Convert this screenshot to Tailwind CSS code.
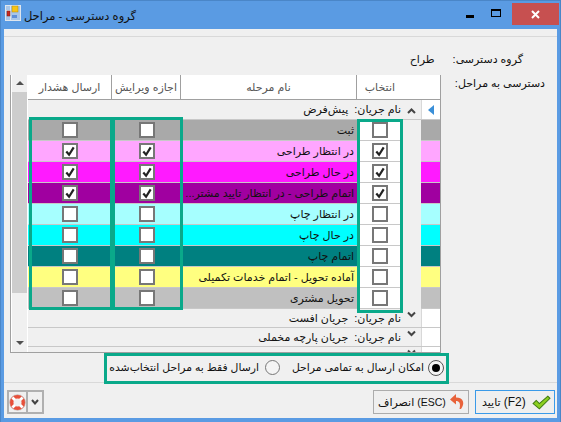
<!DOCTYPE html>
<html lang="fa">
<head>
    <meta charset="UTF-8">
    <title>گروه دسترسی - مراحل</title>
    <script src="https://cdn.jsdelivr.net/npm/@tailwindcss/browser@4"></script>
</head>
<body class="bg-[#5a9be3]">
    <div class="relative w-[561px] h-[422px] overflow-hidden flex flex-col text-[11px] text-[#111] font-['Liberation_Sans','DejaVu_Sans',sans-serif] border border-[#4a86c8] border-b-0">
        <!-- title bar -->
        <header class="h-[28px] shrink-0 flex items-start bg-[#5a9be3]">
            <svg class="ml-[4px] mt-[4px] w-[16px] h-[16px]" viewBox="0 0 16 16">
                <rect x="0.5" y="0.5" width="15" height="15" fill="#a9c6e8" stroke="#dfe6ee"/>
                <path d="M0 5.5 H5 M5.5 0 V16" stroke="#dfe6ee"/>
                <rect x="2" y="6" width="3" height="5" fill="#c8281e" stroke="#7a1a14" stroke-width="0.5"/>
                <rect x="7" y="1" width="6" height="6" fill="#f7c416" stroke="#b08a10" stroke-width="0.5"/>
                <rect x="7" y="10" width="5" height="3" fill="#5f8fd8"/>
            </svg>
            <span dir="rtl" class="ml-[5px] mt-[6px] w-[110px] text-[11.5px] leading-[18px] whitespace-nowrap">گروه دسترسی - مراحل</span>
            <div class="ml-auto flex items-start">
                <div class="w-[26px] h-[24px] flex items-start justify-center"><div class="mt-[14px] w-[8px] h-[3px] bg-black"></div></div>
                <div class="w-[26px] h-[24px] flex items-start justify-center"><div class="mt-[8px] w-[10px] h-[8px] border border-black border-t-2"></div></div>
                <div class="ml-[3px] mr-[1px] mt-[2px] w-[47px] h-[22px] bg-[#c75050] flex items-center justify-center">
                    <svg class="w-[9px] h-[9px]" viewBox="0 0 9 9"><path d="M1 1 L8 8 M8 1 L1 8" stroke="#fff" stroke-width="2"/></svg>
                </div>
            </div>
        </header>

        <!-- dialog body -->
        <main class="mx-[3px] mb-[4px] flex-1 bg-[#f0f0f0] flex flex-col">
            <div class="h-[8px] border-b border-[#d9d9d9]"></div>

            <div dir="rtl" class="h-[38px] pt-[14px] pr-[34px] flex gap-[18px] leading-[16px] whitespace-nowrap">
                <span>گروه دسترسی:</span>
                <span>طراح</span>
            </div>

            <div class="flex pl-[6px] h-[278px]">
                <!-- grid -->
                <div class="w-[431px] h-[278px] shrink-0 border-l border-r border-b border-[#a0a0a0] flex bg-[#f0f0f0]">
                    <!-- scrollbar -->
                    <div class="w-[17px] shrink-0 bg-white flex">
                        <div class="ml-[1px] w-[15px] bg-[#f0f0f0] flex flex-col items-center">
                            <div class="mt-[6px] w-0 h-0 border-x-[4px] border-x-transparent border-b-[4px] border-b-[#505050]"></div>
                            <div class="mt-[7px] w-full h-[201px] bg-[#cdcdcd]"></div>
                            <div class="mt-[48px] w-0 h-0 border-x-[4px] border-x-transparent border-t-[4px] border-t-[#505050]"></div>
                        </div>
                    </div>
                    <!-- table -->
                    <div class="flex-1 min-w-0 overflow-hidden">
                        <div class="h-[25px] flex bg-white border-b border-[#a0a0a0] text-[#555]">
                            <div dir="rtl" class="w-[84px] border-r border-[#a0a0a0] flex items-center justify-center">ارسال هشدار</div>
                            <div dir="rtl" class="w-[69px] border-r border-[#a0a0a0] flex items-center justify-center">اجازه ویرایش</div>
                            <div dir="rtl" class="w-[176px] border-r border-[#a0a0a0] flex items-center justify-center">نام مرحله</div>
                            <div dir="rtl" class="w-[83px] pr-[45px] flex items-center justify-start">انتخاب</div>
                        </div>
                        <div id="rows"></div>
                    </div>
                </div>
                <div dir="rtl" class="flex-1 pr-[12px] leading-[16px] whitespace-nowrap">دسترسی به مراحل:</div>
            </div>

            <!-- radios -->
            <div class="h-[30px] border-b border-[#d9d9d9] flex items-start pl-[100px]">
                <div class="w-[344px] h-[29px] flex items-center text-[10.8px]">
                    <div dir="rtl" class="w-[150px] ml-[5px] text-right whitespace-nowrap">ارسال فقط به مراحل انتخاب‌شده</div>
                    <div class="ml-[6px] w-[15px] h-[15px] rounded-full border border-[#777] bg-[#f4f4f4]"></div>
                    <div dir="rtl" class="ml-[12px] w-[132px] whitespace-nowrap text-right">امکان ارسال به تمامی مراحل</div>
                    <div class="ml-[4px] w-[16px] h-[16px] rounded-full border border-[#555] bg-[#f4f4f4] flex items-center justify-center"><div class="w-[8px] h-[8px] rounded-full bg-black"></div></div>
                </div>
            </div>

            <!-- footer -->
            <footer class="flex items-start pt-[7px] pl-[3px] pr-[2px]">
                <div class="h-[24px] flex border-2 border-[#b0b0b0]">
                    <div class="w-[19px] flex items-center justify-center border-r-2 border-[#b0b0b0]">
                        <svg class="w-[17px] h-[17px]" viewBox="0 0 16 16">
                            <circle cx="8" cy="8" r="5.6" fill="none" stroke="#e8503a" stroke-width="3.6"/>
                            <path d="M3.2 3.2 L5.6 5.6 M12.8 3.2 L10.4 5.6 M3.2 12.8 L5.6 10.4 M12.8 12.8 L10.4 10.4" stroke="#fff" stroke-width="2.6"/>
                            <circle cx="8" cy="8" r="7.4" fill="none" stroke="#b8b8b8" stroke-width="0.5"/>
                        </svg>
                    </div>
                    <div class="w-[14px] flex items-center justify-center">
                        <svg class="w-[8px] h-[6px]" viewBox="0 0 8 6"><path d="M1 1 L4 4.5 L7 1" fill="none" stroke="#444" stroke-width="2"/></svg>
                    </div>
                </div>
                <div class="ml-auto flex gap-[6px]">
                    <div class="w-[96px] h-[24px] bg-[#efefef] border border-[#acacac] flex items-center pl-[4px] pr-[3px]">
                        <span dir="rtl" class="whitespace-nowrap"><span class="text-[10.5px]">(ESC)</span> انصراف</span>
                        <svg class="ml-auto w-[16px] h-[18px]" viewBox="0 0 16 18"><path d="M7 1 L1 6.5 L7 11.5 L7 8 C10 8 12 10 10.5 16 L12 16 C16 11 15 4.5 7 4.5 Z" fill="#e8623a"/></svg>
                    </div>
                    <div class="w-[80px] h-[24px] bg-[#efefef] border border-[#3a9ae8] flex items-center justify-between pl-[6px] pr-[3px]">
                        <span dir="rtl" class="whitespace-nowrap"><span class="text-[12px]">(F2)</span> تایید</span>
                        <svg class="w-[19px] h-[15px]" viewBox="0 0 18 14"><path d="M1 8 L4 5 L7 8 L15 1 L17 3 L7 13 Z" fill="#8ccf1f" stroke="#3d7a10"/></svg>
                    </div>
                </div>
            </footer>
        </main>

        <!-- teal highlight boxes drawn over the form -->
        <div class="absolute left-[28px] top-[116px] w-[84px] h-[193px] border-[3px] border-[#0aa98a]"></div>
        <div class="absolute left-[111px] top-[116px] w-[71px] h-[193px] border-[3px] border-[#0aa98a]"></div>
        <div class="absolute left-[356px] top-[118px] w-[46px] h-[194px] border-[3px] border-[#0aa98a]"></div>
        <div class="absolute left-[103px] top-[352px] w-[345px] h-[31px] border-[3px] border-[#0aa98a]"></div>
    </div>

    <script>
        const check = `<svg class="w-[13px] h-[13px]" viewBox="0 0 13 13"><path d="M2.5 6.5 L5.5 10 L10.5 2" fill="none" stroke="#222" stroke-width="2.4"/></svg>`;
        const box = (on, bg) => `<div class="w-[16px] h-[16px] border-2 border-[#777] ${bg} flex items-center justify-center">${on ? check : ''}</div>`;

        const steps = [
            { name: 'ثبت', bg: 'bg-[#a9a9a9]', alert: 0, edit: 0, sel: 0 },
            { name: 'در انتظار طراحی', bg: 'bg-[#ffa6ff]', alert: 1, edit: 1, sel: 1 },
            { name: 'در حال طراحی', bg: 'bg-[#ff1aff]', alert: 1, edit: 1, sel: 1 },
            { name: 'اتمام طراحی - در انتظار تایید مشتر...', bg: 'bg-[#a000a0]', alert: 1, edit: 1, sel: 1 },
            { name: 'در انتظار چاپ', bg: 'bg-[#a6ffff]', alert: 0, edit: 0, sel: 0 },
            { name: 'در حال چاپ', bg: 'bg-[#00ffff]', alert: 0, edit: 0, sel: 0 },
            { name: 'اتمام چاپ', bg: 'bg-[#008080]', alert: 0, edit: 0, sel: 0 },
            { name: 'آماده تحویل - اتمام خدمات تکمیلی', bg: 'bg-[#ffff80]', alert: 0, edit: 0, sel: 0 },
            { name: 'تحویل مشتری', bg: 'bg-[#c0c0c0]', alert: 0, edit: 0, sel: 0 },
        ];

        const chevron = (d) => `<svg class="w-[9px] h-[7px]" viewBox="0 0 9 7"><path d="${d}" fill="none" stroke="#444" stroke-width="2"/></svg>`;
        const group = (label, h, open) => `
            <div class="flex border-b border-[#c8c8c8]" style="height:${h}px">
                <div dir="rtl" class="w-[374px] pr-[1px] flex items-center whitespace-nowrap overflow-hidden">${label}</div>
                <div class="w-[19px] flex items-start justify-center ${open ? 'pt-[8px]' : 'pt-[2px]'}">${chevron(open ? 'M1 5 L4.5 1.5 L8 5' : 'M1 1.5 L4.5 5 L8 1.5')}</div>
                <div class="w-[19px] bg-white border-l border-[#d8d8d8] flex items-center justify-center">${open ? '<div class="w-0 h-0 border-y-[5px] border-y-transparent border-r-[6px] border-r-[#3a8fd8]"></div>' : ''}</div>
            </div>`;

        let html = group('نام جریان:&nbsp; پیش‌فرض', 20, true);
        steps.forEach(s => {
            html += `
            <div class="h-[21px] flex">
                <div class="w-[84px] ${s.bg} border-b border-[#c8c8c8] flex items-center justify-center">${box(s.alert, 'bg-white')}</div>
                <div class="w-[69px] ${s.bg} border-b border-[#c8c8c8] flex items-center justify-center">${box(s.edit, 'bg-white')}</div>
                <div dir="rtl" class="w-[176px] ${s.bg} border-b border-[#c8c8c8] pr-[3px] flex items-center whitespace-nowrap overflow-hidden">${s.name}</div>
                <div class="w-[45px] bg-white border-b border-[#c8c8c8] flex items-center justify-center">${box(s.sel, 'bg-white')}</div>
                <div class="w-[19px]"></div>
                <div class="w-[19px] ${s.bg} border-b border-[#c8c8c8]"></div>
            </div>`;
        });
        html += group('نام جریان:&nbsp; جریان افست', 19, false);
        html += group('نام جریان:&nbsp; جریان پارچه مخملی', 19, false);
        html += group('', 7, false);
        document.getElementById('rows').innerHTML = html;
    </script>
</body>
</html>
